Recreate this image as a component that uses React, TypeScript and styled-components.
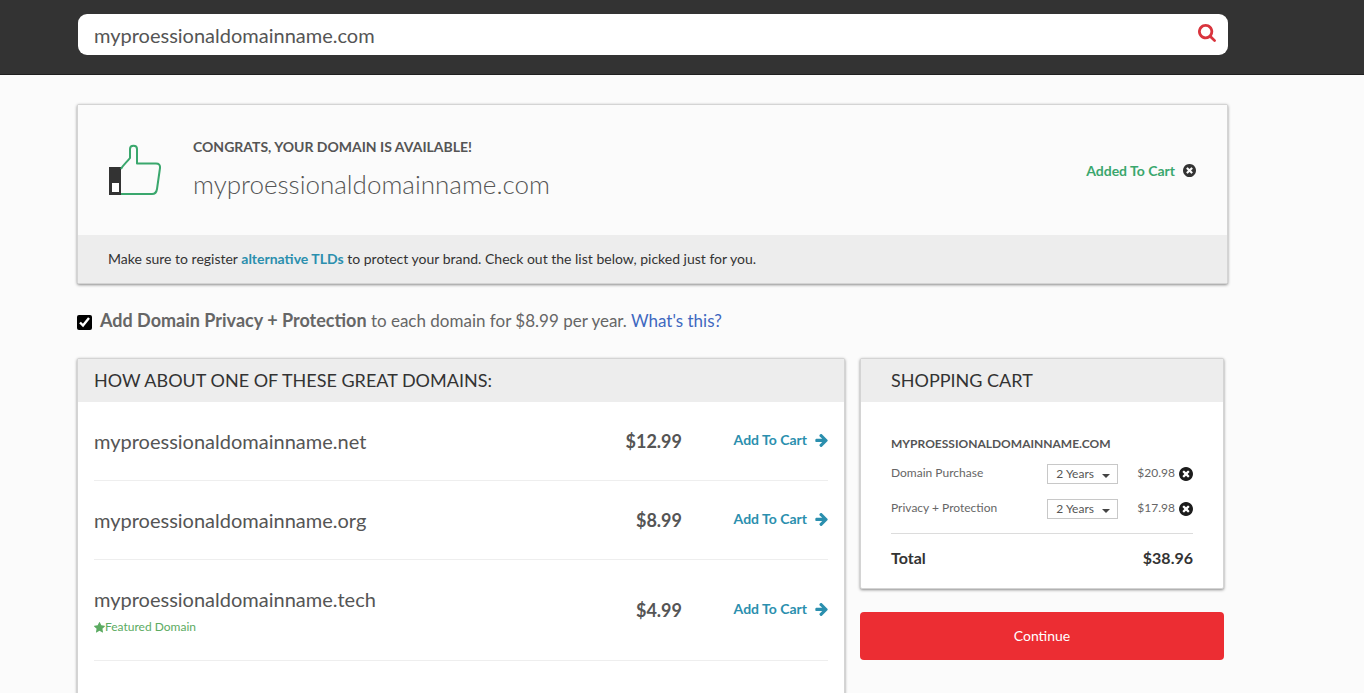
import React, { useState } from "react";
import styled, { createGlobalStyle } from "styled-components";

const colors = {
  ink: "#333333",
  text: "#555555",
  panel: "#ededed",
  teal: "#2b8fae",
  green: "#3aa76d",
  red: "#ec2d33",
};

const GlobalStyle = createGlobalStyle`
  *, *::before, *::after { box-sizing: border-box; }
  html { scrollbar-width: none; }
  body {
    margin: 0;
    background: #fbfbfb;
    color: ${colors.text};
    font-family: Lato, "Liberation Sans", sans-serif;
    font-size: 16px;
  }
  button, input, select { font-family: inherit; }
  h1, h2, h3, p, ul, dl, dd { margin: 0; padding: 0; }
`;

const Header = styled.header`
  background: ${colors.ink};
  border-bottom: 1px solid #1f1f1f;
  padding: 14px 136px 19px 78px;
`;

const SearchForm = styled.form`
  display: flex;
  align-items: center;
  height: 41px;
  padding: 0 12px 0 16px;
  border-radius: 9px;
  background: #fff;
`;

const SearchInput = styled.input`
  flex: 1;
  min-width: 0;
  height: 100%;
  padding: 0;
  border: 0;
  outline: 0;
  background: transparent;
  color: ${colors.text};
  font-size: 20px;
`;

const IconButton = styled.button<{ $color: string }>`
  display: inline-flex;
  padding: 0;
  border: 0;
  background: none;
  color: ${(p) => p.$color};
  cursor: pointer;
`;

const SearchButton = styled(IconButton)`
  padding-bottom: 3px;
`;

const Page = styled.main`
  padding: 29px 136px 40px 77px;
`;

const Card = styled.section`
  border: 1px solid #d4d4d4;
  border-radius: 2px;
  background: #fff;
  box-shadow: 0 1px 3px rgba(0, 0, 0, 0.45);
`;

const ResultBody = styled.div`
  display: flex;
  align-items: center;
  height: 130px;
  padding: 0 31px;
  background: #fbfbfb;
`;

const ResultText = styled.div`
  flex: 1;
  padding: 0 0 2px 32px;
`;

const ResultHeading = styled.h1`
  font-size: 14px;
  line-height: 20px;
  font-weight: 700;
`;

const ResultDomain = styled.p`
  padding-top: 10px;
  font-size: 26px;
  line-height: 34px;
  font-weight: 300;
`;

const Added = styled.div`
  display: flex;
  align-items: center;
  gap: 8px;
  color: ${colors.green};
  font-size: 14px;
  font-weight: 700;
`;

const ResultNote = styled.p`
  padding: 12px 30px 13px;
  background: ${colors.panel};
  color: ${colors.ink};
  font-size: 14px;
  line-height: 23px;
`;

const Link = styled.a<{ $color: string; $bold?: boolean }>`
  color: ${(p) => p.$color};
  font-weight: ${(p) => (p.$bold ? 700 : 400)};
  text-decoration: none;
`;

const Privacy = styled.div`
  display: flex;
  align-items: center;
  gap: 8px;
  padding: 22px 0 23px;
  color: #666;
  font-size: 17px;
  line-height: 28px;

  strong { font-size: 18px; }
`;

const PrivacyBox = styled.input`
  width: 15px;
  height: 15px;
  margin: 3px 0 0;
  accent-color: #000;
`;

const Columns = styled.div`
  display: grid;
  grid-template-columns: 768fr 364fr;
  align-items: start;
  gap: 15px;
  padding-right: 4px;
`;

const PanelHeading = styled.h2<{ $inset: number }>`
  padding: 0 ${(p) => p.$inset}px;
  background: ${colors.panel};
  color: ${colors.ink};
  font-size: 18px;
  line-height: 43px;
  font-weight: 400;
`;

const DomainList = styled.ul`
  padding: 0 16px;
  list-style: none;
`;

const DomainRow = styled.li`
  display: flex;
  align-items: center;
  padding: 25px 0;
  border-bottom: 1px solid #eeeeee;
`;

const DomainName = styled.div`
  flex: 1;
  font-size: 20px;
  line-height: 28px;
`;

const Featured = styled.div`
  display: flex;
  align-items: center;
  padding-top: 6px;
  color: #5cab62;
  font-size: 12px;
  line-height: 16px;
`;

const Price = styled.div`
  width: 90px;
  font-size: 18px;
  font-weight: 700;
  text-align: right;
`;

const AddButton = styled.button`
  display: flex;
  align-items: center;
  justify-content: flex-end;
  gap: 8px;
  width: 146px;
  padding: 0 0 2px;
  border: 0;
  background: none;
  color: ${colors.teal};
  font-size: 14px;
  line-height: 20px;
  font-weight: 700;
  cursor: pointer;
`;

const CartBody = styled.div`
  padding: 32px 30px 17px;
`;

const CartDomain = styled.h3`
  padding-bottom: 2px;
  font-size: 12px;
  line-height: 20px;
  font-weight: 700;
`;

const CartLine = styled.div`
  display: flex;
  align-items: center;
  height: 35px;
  color: #666;
  font-size: 12px;
`;

const CartLabel = styled.label`
  flex: 1;
  padding-bottom: 2px;
`;

const SelectBox = styled.div`
  display: grid;
  width: 71px;
  height: 20px;
  margin-right: 19px;
  align-items: center;

  & > * { grid-area: 1 / 1; }
  & > svg { justify-self: end; margin: 4px 8px 0 0; pointer-events: none; }
`;

const YearSelect = styled.select`
  appearance: none;
  width: 100%;
  height: 100%;
  padding: 0 8px;
  border: 1px solid #c8c8c8;
  border-radius: 0;
  background: #fff;
  color: ${colors.text};
  font-size: 12px;
`;

const CartPrice = styled.span`
  margin-right: 4px;
  padding-bottom: 2px;
`;

const CartTotal = styled.div`
  display: flex;
  justify-content: space-between;
  margin-top: 7px;
  padding-top: 11px;
  border-top: 1px solid #dcdcdc;
  color: ${colors.ink};
  font-size: 16px;
  line-height: 26px;
  font-weight: 700;
`;

const ContinueButton = styled.button`
  width: 100%;
  height: 48px;
  margin-top: 23px;
  padding: 0 0 2px;
  border: 0;
  border-radius: 4px;
  background: ${colors.red};
  color: #fff;
  font-size: 14px;
  cursor: pointer;
`;

type IconProps = { size: number };

const SearchIcon = ({ size }: IconProps) => (
  <svg width={size} height={size} viewBox="0 0 1664 1664" fill="currentColor" aria-hidden="true">
    <path d="M1152 704q0-185-131.5-316.5t-316.5-131.5-316.5 131.5-131.5 316.5 131.5 316.5 316.5 131.5 316.5-131.5 131.5-316.5zm512 832q0 52-38 90t-90 38q-54 0-90-38l-343-342q-179 124-399 124-143 0-273.5-55.5t-225-150-150-225-55.5-273.5 55.5-273.5 150-225 225-150 273.5-55.5 273.5 55.5 225 150 150 225 55.5 273.5q0 220-124 399l343 343q37 37 37 90z" />
  </svg>
);

const RemoveIcon = ({ size }: IconProps) => (
  <svg width={size} height={size} viewBox="128 128 1536 1536" fill="currentColor" aria-hidden="true">
    <path d="M1277 1122q0-26-19-45l-181-181 181-181q19-19 19-45 0-27-19-46l-90-90q-19-19-46-19-26 0-45 19l-181 181-181-181q-19-19-45-19-27 0-46 19l-90 90q-19 19-19 46 0 26 19 45l181 181-181 181q-19 19-19 45 0 27 19 46l90 90q19 19 46 19 26 0 45-19l181-181 181 181q19 19 45 19 27 0 46-19l90-90q19-19 19-46zm387-226q0 209-103 385.5t-279.5 279.5-385.5 103-385.5-103-279.5-279.5-103-385.5 103-385.5 279.5-279.5 385.5-103 385.5 103 279.5 279.5 103 385.5z" />
  </svg>
);

const ArrowIcon = ({ size }: IconProps) => (
  <svg width={size} height={size} viewBox="90 190 1550 1550" fill="currentColor" aria-hidden="true">
    <path d="M1600 960q0 54-37 91l-651 651q-39 37-91 37-51 0-90-37l-75-75q-38-38-38-91t38-91l293-293h-704q-52 0-84.5-37.5t-32.5-90.5v-128q0-53 32.5-90.5t84.5-37.5h704l-293-294q-38-36-38-90t38-90l75-75q38-38 90-38 53 0 91 38l651 651q37 35 37 90z" />
  </svg>
);

const StarIcon = ({ size }: IconProps) => (
  <svg width={size} height={size} viewBox="64 32 1664 1664" fill="currentColor" aria-hidden="true">
    <path d="M1728 647q0 22-26 48l-363 354 86 500q1 7 1 20 0 21-10.5 35.5t-30.5 14.5q-19 0-40-12l-449-236-449 236q-22 12-40 12-21 0-31.5-14.5t-10.5-35.5q0-6 2-20l86-500-364-354q-25-27-25-48 0-37 56-46l502-73 225-455q19-41 49-41t49 41l225 455 502 73q56 9 56 46z" />
  </svg>
);

const CaretIcon = () => (
  <svg width="8" height="4" viewBox="0 0 8 4" fill="#444" aria-hidden="true">
    <path d="M0 0h8L4 4z" />
  </svg>
);

const ThumbIcon = () => (
  <svg width="52" height="52" viewBox="0 0 52 52" fill="none" aria-hidden="true">
    <rect x="0" y="23" width="12" height="28" fill="#333" />
    <rect x="3" y="39" width="7" height="9" fill="#fff" />
    <path
      d="M12 25C14 21 18 18 21 14V5C21 .5 28 .5 28 5V19.500H47C50 19.500 51.200 21 51 24L48 45C47.500 48.500 46 50 43 50H12"
      stroke={colors.green}
      strokeWidth="2"
      strokeLinejoin="round"
    />
  </svg>
);

const suggestions = [
  { tld: "net", price: "$12.99", featured: false },
  { tld: "org", price: "$8.99", featured: false },
  { tld: "tech", price: "$4.99", featured: true },
  { tld: "co", price: "$12.99", featured: true },
];

const cartLines = [
  { id: "purchase", label: "Domain Purchase", price: "$20.98" },
  { id: "privacy", label: "Privacy + Protection", price: "$17.98" },
];

export default function App() {
  const [query, setQuery] = useState("myproessionaldomainname.com");
  const [privacy, setPrivacy] = useState(true);

  return (
    <>
      <GlobalStyle />
      <Header>
        <SearchForm role="search" onSubmit={(e) => e.preventDefault()}>
          <SearchInput
            aria-label="Domain name"
            value={query}
            onChange={(e) => setQuery(e.target.value)}
          />
          <SearchButton type="submit" aria-label="Search" $color="#d9343d">
            <SearchIcon size={18} />
          </SearchButton>
        </SearchForm>
      </Header>
      <Page>
        <Card>
          <ResultBody>
            <ThumbIcon />
            <ResultText>
              <ResultHeading>CONGRATS, YOUR DOMAIN IS AVAILABLE!</ResultHeading>
              <ResultDomain>myproessionaldomainname.com</ResultDomain>
            </ResultText>
            <Added>
              Added To Cart
              <IconButton type="button" aria-label="Remove from cart" $color={colors.ink}>
                <RemoveIcon size={13} />
              </IconButton>
            </Added>
          </ResultBody>
          <ResultNote>
            Make sure to register{" "}
            <Link href="#suggestions" $color={colors.teal} $bold>
              alternative TLDs
            </Link>{" "}
            to protect your brand. Check out the list below, picked just for you.
          </ResultNote>
        </Card>

        <Privacy>
          <PrivacyBox
            id="add-privacy"
            type="checkbox"
            checked={privacy}
            onChange={(e) => setPrivacy(e.target.checked)}
          />
          <span>
            <label htmlFor="add-privacy">
              <strong>Add Domain Privacy + Protection</strong> to each domain for $8.99 per year.
            </label>{" "}
            <Link href="#privacy" $color="#3f68c0">
              What's this?
            </Link>
          </span>
        </Privacy>

        <Columns>
          <Card id="suggestions">
            <PanelHeading $inset={16}>HOW ABOUT ONE OF THESE GREAT DOMAINS:</PanelHeading>
            <DomainList>
              {suggestions.map((s) => (
                <DomainRow key={s.tld}>
                  <DomainName>
                    myproessionaldomainname.{s.tld}
                    {s.featured && (
                      <Featured>
                        <StarIcon size={11} />
                        Featured Domain
                      </Featured>
                    )}
                  </DomainName>
                  <Price>{s.price}</Price>
                  <AddButton type="button">
                    Add To Cart
                    <ArrowIcon size={13} />
                  </AddButton>
                </DomainRow>
              ))}
            </DomainList>
          </Card>

          <aside>
            <Card>
              <PanelHeading $inset={30}>SHOPPING CART</PanelHeading>
              <CartBody>
                <CartDomain>MYPROESSIONALDOMAINNAME.COM</CartDomain>
                {cartLines.map((line) => (
                  <CartLine key={line.id}>
                    <CartLabel htmlFor={line.id}>{line.label}</CartLabel>
                    <SelectBox>
                      <YearSelect id={line.id} defaultValue="2">
                        <option value="1">1 Year</option>
                        <option value="2">2 Years</option>
                        <option value="3">3 Years</option>
                      </YearSelect>
                      <CaretIcon />
                    </SelectBox>
                    <CartPrice>{line.price}</CartPrice>
                    <IconButton type="button" aria-label={`Remove ${line.label}`} $color="#1c1c1c">
                      <RemoveIcon size={14} />
                    </IconButton>
                  </CartLine>
                ))}
                <CartTotal>
                  <span>Total</span>
                  <span>$38.96</span>
                </CartTotal>
              </CartBody>
            </Card>
            <ContinueButton type="button">Continue</ContinueButton>
          </aside>
        </Columns>
      </Page>
    </>
  );
}
